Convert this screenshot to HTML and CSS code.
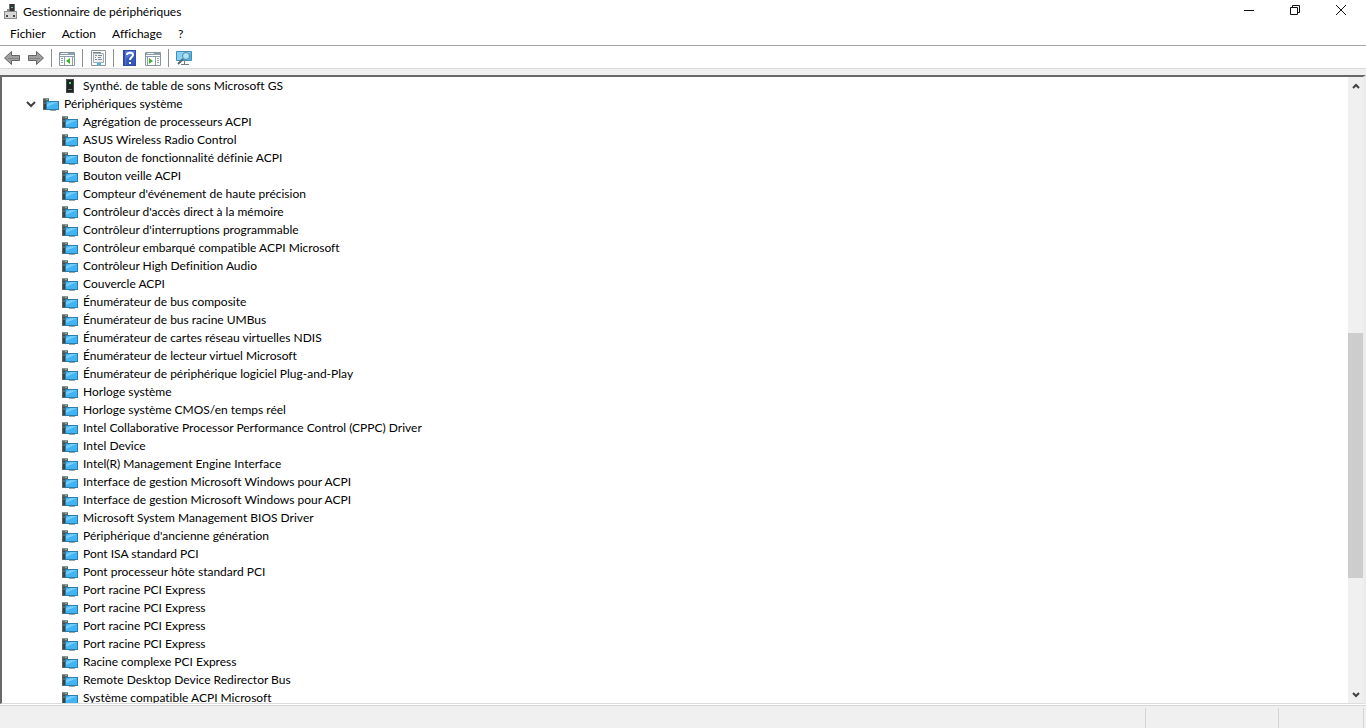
FILE: index.html
```html
<!DOCTYPE html>
<html lang="fr">
<head>
<meta charset="utf-8">
<title>Gestionnaire de périphériques</title>
<link rel="stylesheet" href="styles.css">
</head>
<body>
<svg class="sprite" aria-hidden="true">
  <symbol id="system" viewBox="0 0 16 16">
    <path fill="#5d6566" d="M0 2h6v12H0z"/>
    <path fill="#8a9292" d="M0 2h6v1H0z"/>
    <path fill="#3a4244" d="M1 5h4v1H1zM1 8h3v5H1z"/>
    <path fill="#74b88b" d="M3 3h2v1H3z"/>
    <path fill="#2a7fae" d="M3 5h13v9H3z"/>
    <path fill="#42b4f4" d="M4 6h11v7H4z"/>
    <path fill="#73ccfa" d="M4 11V8l5-2h6z"/>
    <path fill="#9aa5aa" d="M7 14h6v1H7z"/>
  </symbol>
  <symbol id="software" viewBox="0 0 16 16">
    <path fill="#454a4b" d="M4 1h8v14H4z"/>
    <path fill="#1d2222" d="M5 2h6v12H5z"/>
    <path fill="#42db63" d="M7 4h2v2H7z"/>
    <path fill="#707575" d="M6 11h4v1H6z"/>
  </symbol>
</svg>
<div class="window">
  <header class="titlebar">
    <svg class="app-icon" viewBox="0 0 16 16" aria-hidden="true">
      <path fill="#303434" d="M6 0h6v9H6z"/><path fill="#6c7270" d="M6 0h1v8H6zM11 0h1v8h-1z"/>
      <path fill="#6cc981" d="M8 3h2v1H8z"/>
      <path fill="#8a8a8a" d="M1 7h3V5h2v2h8v8H1z"/><path fill="#d7d7d7" d="M2 8h11v6H2z"/>
      <path fill="#444" d="M3 11h2v2H3zM10 11h2v2h-2z"/>
    </svg>
    <h1 class="title">Gestionnaire de périphériques</h1>
    <div class="captions">
      <button class="caption" aria-label="Réduire"><svg viewBox="0 0 12 12"><path d="M1 6.500h10"/></svg></button>
      <button class="caption" aria-label="Restaurer"><svg viewBox="0 0 12 12"><path d="M1.500 3.500h7v7h-7zM3.500 3V1.500h7v7H9"/></svg></button>
      <button class="caption" aria-label="Fermer"><svg viewBox="0 0 12 12"><path d="M1 1l10 10M11 1L1 11"/></svg></button>
    </div>
  </header>
  <nav class="menubar">
    <button class="menu">Fichier</button>
    <button class="menu">Action</button>
    <button class="menu">Affichage</button>
    <button class="menu">?</button>
  </nav>
  <div class="toolbar" role="toolbar">
    <button class="tool" aria-label="Précédent"><svg viewBox="0 0 18 18"><path fill="#a0a0a0" stroke="#656565" d="M1.500 9l7-6.500v4h8v5h-8v4z"/><path stroke="#858585" d="M5 9.500h11"/></svg></button>
    <button class="tool" aria-label="Suivant"><svg viewBox="0 0 18 18"><path fill="#a0a0a0" stroke="#656565" d="M16.500 9l-7-6.500v4h-8v5h8v4z"/><path stroke="#858585" d="M2 9.500h11"/></svg></button>
    <span class="separator"></span>
    <button class="tool" aria-label="Afficher l'arborescence"><svg viewBox="0 0 18 18"><path fill="#fff" stroke="#8b959c" d="M1.500 3.500h15v13h-15z"/><path fill="#8b9fac" d="M2 4h14v2H2z"/><path fill="#e4edf2" d="M3 4h7v1H3z"/><path stroke="#8b9fac" d="M2 7.500h14M6.500 8v8M3 9.500h2M3 11.500h2M3 13.500h2M14.500 8v8"/><path fill="#3eb52b" d="M8 12l4-3v6z"/></svg></button>
    <span class="separator"></span>
    <button class="tool" aria-label="Propriétés"><svg viewBox="0 0 18 18"><path fill="#fff" stroke="#8c979d" d="M2.500 1.500h14v15h-14z"/><path fill="#eef2f4" stroke="#a3adb2" d="M4.500 4.500h10v9h-10z"/><path stroke="#7c8992" d="M4 3.500h8M6 6.500h2M9 6.500h4M6 8.500h1M9 8.500h3M6 10.500h2M9 10.500h4"/><path stroke="#49bce1" stroke-width="2" d="M8 15h4"/></svg></button>
    <span class="separator"></span>
    <button class="tool" aria-label="Aide"><svg viewBox="0 0 18 18"><path fill="#304ba7" d="M3 1h13v16H3z"/><path fill="#5477d0" d="M5 2h10v14H5z"/><path fill="#3559bd" d="M6 10l9-7v13H6z"/><path fill="none" stroke="#fff" stroke-width="2" d="M7 6c0-3 6-3 6 0 0 2-3 2-3 5M10 13v2"/></svg></button>
    <button class="tool" aria-label="Afficher le volet Action"><svg viewBox="0 0 18 18"><path fill="#fff" stroke="#8b959c" d="M1.500 3.500h15v13h-15z"/><path fill="#8b9fac" d="M2 4h14v2H2z"/><path fill="#e4edf2" d="M3 4h7v1H3z"/><path stroke="#8b9fac" d="M2 7.500h14M3.500 8v8M11.500 8v8M13 9.500h2M13 11.500h2M13 13.500h2"/><path fill="#3eb52b" d="M9 12L5 9v6z"/></svg></button>
    <span class="separator"></span>
    <button class="tool" aria-label="Rechercher les modifications sur le matériel"><svg viewBox="0 0 18 18"><path fill="#4fb4e4" stroke="#3f8fb8" d="M1.500 2.500h15v9h-15z"/><path fill="#86d2f5" d="M2 3h14l-9 8H2z"/><path stroke="#727c82" d="M9.500 12v3M6 15.500h8"/><circle cx="11" cy="7" r="3.500" fill="#a8e4fc" stroke="#638493"/><path stroke="#566971" stroke-width="2" d="M8 10l-5 5"/></svg></button>
  </div>
  <main class="pane">
    <div class="tree">
      <ul class="items">
        <li class="item"><svg class="icon"><use href="#software"/></svg>Synthé. de table de sons Microsoft GS</li>
      </ul>
      <div class="group"><svg class="arrow" viewBox="0 0 10 10"><path d="M1 3l4 4 4-4"/></svg><svg class="icon"><use href="#system"/></svg>Périphériques système</div>
      <ul class="items">
        <li class="item"><svg class="icon"><use href="#system"/></svg>Agrégation de processeurs ACPI</li>
        <li class="item"><svg class="icon"><use href="#system"/></svg>ASUS Wireless Radio Control</li>
        <li class="item"><svg class="icon"><use href="#system"/></svg>Bouton de fonctionnalité définie ACPI</li>
        <li class="item"><svg class="icon"><use href="#system"/></svg>Bouton veille ACPI</li>
        <li class="item"><svg class="icon"><use href="#system"/></svg>Compteur d'événement de haute précision</li>
        <li class="item"><svg class="icon"><use href="#system"/></svg>Contrôleur d'accès direct à la mémoire</li>
        <li class="item"><svg class="icon"><use href="#system"/></svg>Contrôleur d'interruptions programmable</li>
        <li class="item"><svg class="icon"><use href="#system"/></svg>Contrôleur embarqué compatible ACPI Microsoft</li>
        <li class="item"><svg class="icon"><use href="#system"/></svg>Contrôleur High Definition Audio</li>
        <li class="item"><svg class="icon"><use href="#system"/></svg>Couvercle ACPI</li>
        <li class="item"><svg class="icon"><use href="#system"/></svg>Énumérateur de bus composite</li>
        <li class="item"><svg class="icon"><use href="#system"/></svg>Énumérateur de bus racine UMBus</li>
        <li class="item"><svg class="icon"><use href="#system"/></svg>Énumérateur de cartes réseau virtuelles NDIS</li>
        <li class="item"><svg class="icon"><use href="#system"/></svg>Énumérateur de lecteur virtuel Microsoft</li>
        <li class="item"><svg class="icon"><use href="#system"/></svg>Énumérateur de périphérique logiciel Plug-and-Play</li>
        <li class="item"><svg class="icon"><use href="#system"/></svg>Horloge système</li>
        <li class="item"><svg class="icon"><use href="#system"/></svg>Horloge système CMOS/en temps réel</li>
        <li class="item"><svg class="icon"><use href="#system"/></svg>Intel Collaborative Processor Performance Control (CPPC) Driver</li>
        <li class="item"><svg class="icon"><use href="#system"/></svg>Intel Device</li>
        <li class="item"><svg class="icon"><use href="#system"/></svg>Intel(R) Management Engine Interface</li>
        <li class="item"><svg class="icon"><use href="#system"/></svg>Interface de gestion Microsoft Windows pour ACPI</li>
        <li class="item"><svg class="icon"><use href="#system"/></svg>Interface de gestion Microsoft Windows pour ACPI</li>
        <li class="item"><svg class="icon"><use href="#system"/></svg>Microsoft System Management BIOS Driver</li>
        <li class="item"><svg class="icon"><use href="#system"/></svg>Périphérique d'ancienne génération</li>
        <li class="item"><svg class="icon"><use href="#system"/></svg>Pont ISA standard PCI</li>
        <li class="item"><svg class="icon"><use href="#system"/></svg>Pont processeur hôte standard PCI</li>
        <li class="item"><svg class="icon"><use href="#system"/></svg>Port racine PCI Express</li>
        <li class="item"><svg class="icon"><use href="#system"/></svg>Port racine PCI Express</li>
        <li class="item"><svg class="icon"><use href="#system"/></svg>Port racine PCI Express</li>
        <li class="item"><svg class="icon"><use href="#system"/></svg>Port racine PCI Express</li>
        <li class="item"><svg class="icon"><use href="#system"/></svg>Racine complexe PCI Express</li>
        <li class="item"><svg class="icon"><use href="#system"/></svg>Remote Desktop Device Redirector Bus</li>
        <li class="item"><svg class="icon"><use href="#system"/></svg>Système compatible ACPI Microsoft</li>
      </ul>
    </div>
    <div class="scrollbar">
      <button class="scroll-button" aria-label="Défiler vers le haut"><svg class="arrow" viewBox="0 0 10 10"><path d="M2 7l3-3 3 3"/></svg></button>
      <div class="track"><div class="space-before"></div><div class="thumb"></div><div class="space-after"></div></div>
      <button class="scroll-button" aria-label="Défiler vers le bas"><svg class="arrow" viewBox="0 0 10 10"><path d="M2 3l3 3 3-3"/></svg></button>
    </div>
  </main>
  <footer class="statusbar"><span class="cell main-cell"></span><span class="cell"></span><span class="cell last-cell"></span></footer>
</div>
</body>
</html>
```
FILE: styles.css
```css
* { box-sizing: border-box; }
body {
  margin: 0;
  font: 12px/18px Lato, "Open Sans", sans-serif;
  font-variant-ligatures: none;
  color: #000;
  background: #fff;
}
button {
  display: flex;
  align-items: center;
  justify-content: center;
  margin: 0;
  padding: 0;
  border: 0;
  font: inherit;
  color: inherit;
  background: transparent;
}
svg { display: block; flex: none; }
.sprite { display: none; }
.window { display: flex; flex-direction: column; height: 100vh; }
.titlebar { display: flex; align-items: center; height: 23px; padding-left: 3px; }
.app-icon { width: 16px; height: 16px; margin-right: 4px; }
.title { flex: 1; margin: 0; font-size: 12px; font-weight: 400; }
.captions { display: flex; align-self: flex-start; padding-right: 2px; }
.caption { width: 46px; height: 20px; }
.caption svg { width: 12px; height: 12px; fill: none; stroke: #111; }
.menubar { display: flex; gap: 16px; height: 23px; padding: 2px 10px; border-bottom: 1px solid #a6a6a6; }
.toolbar {
  display: flex;
  align-items: center;
  gap: 6px;
  height: 23px;
  padding: 1px 3px 0;
  border-bottom: 1px solid #d9d9d9;
}
.tool svg { width: 18px; height: 18px; }
.separator { width: 1px; height: 18px; background: #8e8e8e; }
.pane {
  display: flex;
  flex: 1;
  min-height: 0;
  margin-top: 6px;
  border-top: 2px solid #696969;
  border-left: 2px solid #696969;
  border-right: 3px solid #ececec;
  border-bottom: 1px solid #dcdcdc;
  box-shadow: 0 -6px #f0f0f0;
}
.tree { flex: 1; overflow: hidden; }
.items { margin: 0; padding: 0 0 0 60px; list-style: none; }
.item, .group { display: flex; align-items: center; height: 18px; white-space: nowrap; }
.group { padding-left: 24px; }
.icon { width: 16px; height: 16px; margin-right: 5px; }
.arrow { width: 10px; height: 10px; fill: none; stroke: #404040; stroke-width: 2; }
.group .arrow { margin-right: 7px; }
.scrollbar { display: flex; flex-direction: column; width: 15px; background: #f0f0f0; }
.scroll-button { height: 17px; }
.track { display: flex; flex: 1; flex-direction: column; }
.space-before { flex: 239; }
.thumb { flex: 245; background: #cdcdcd; }
.space-after { flex: 108; }
.statusbar { display: flex; height: 23px; margin-top: 1px; padding: 2px 2px 0 0; border-top: 1px solid #d4d4d4; background: #f0f0f0; }
.cell { width: 133px; border-right: 1px solid #d4d4d4; }
.main-cell { flex: 1; }
.last-cell { width: 85px; }
```
